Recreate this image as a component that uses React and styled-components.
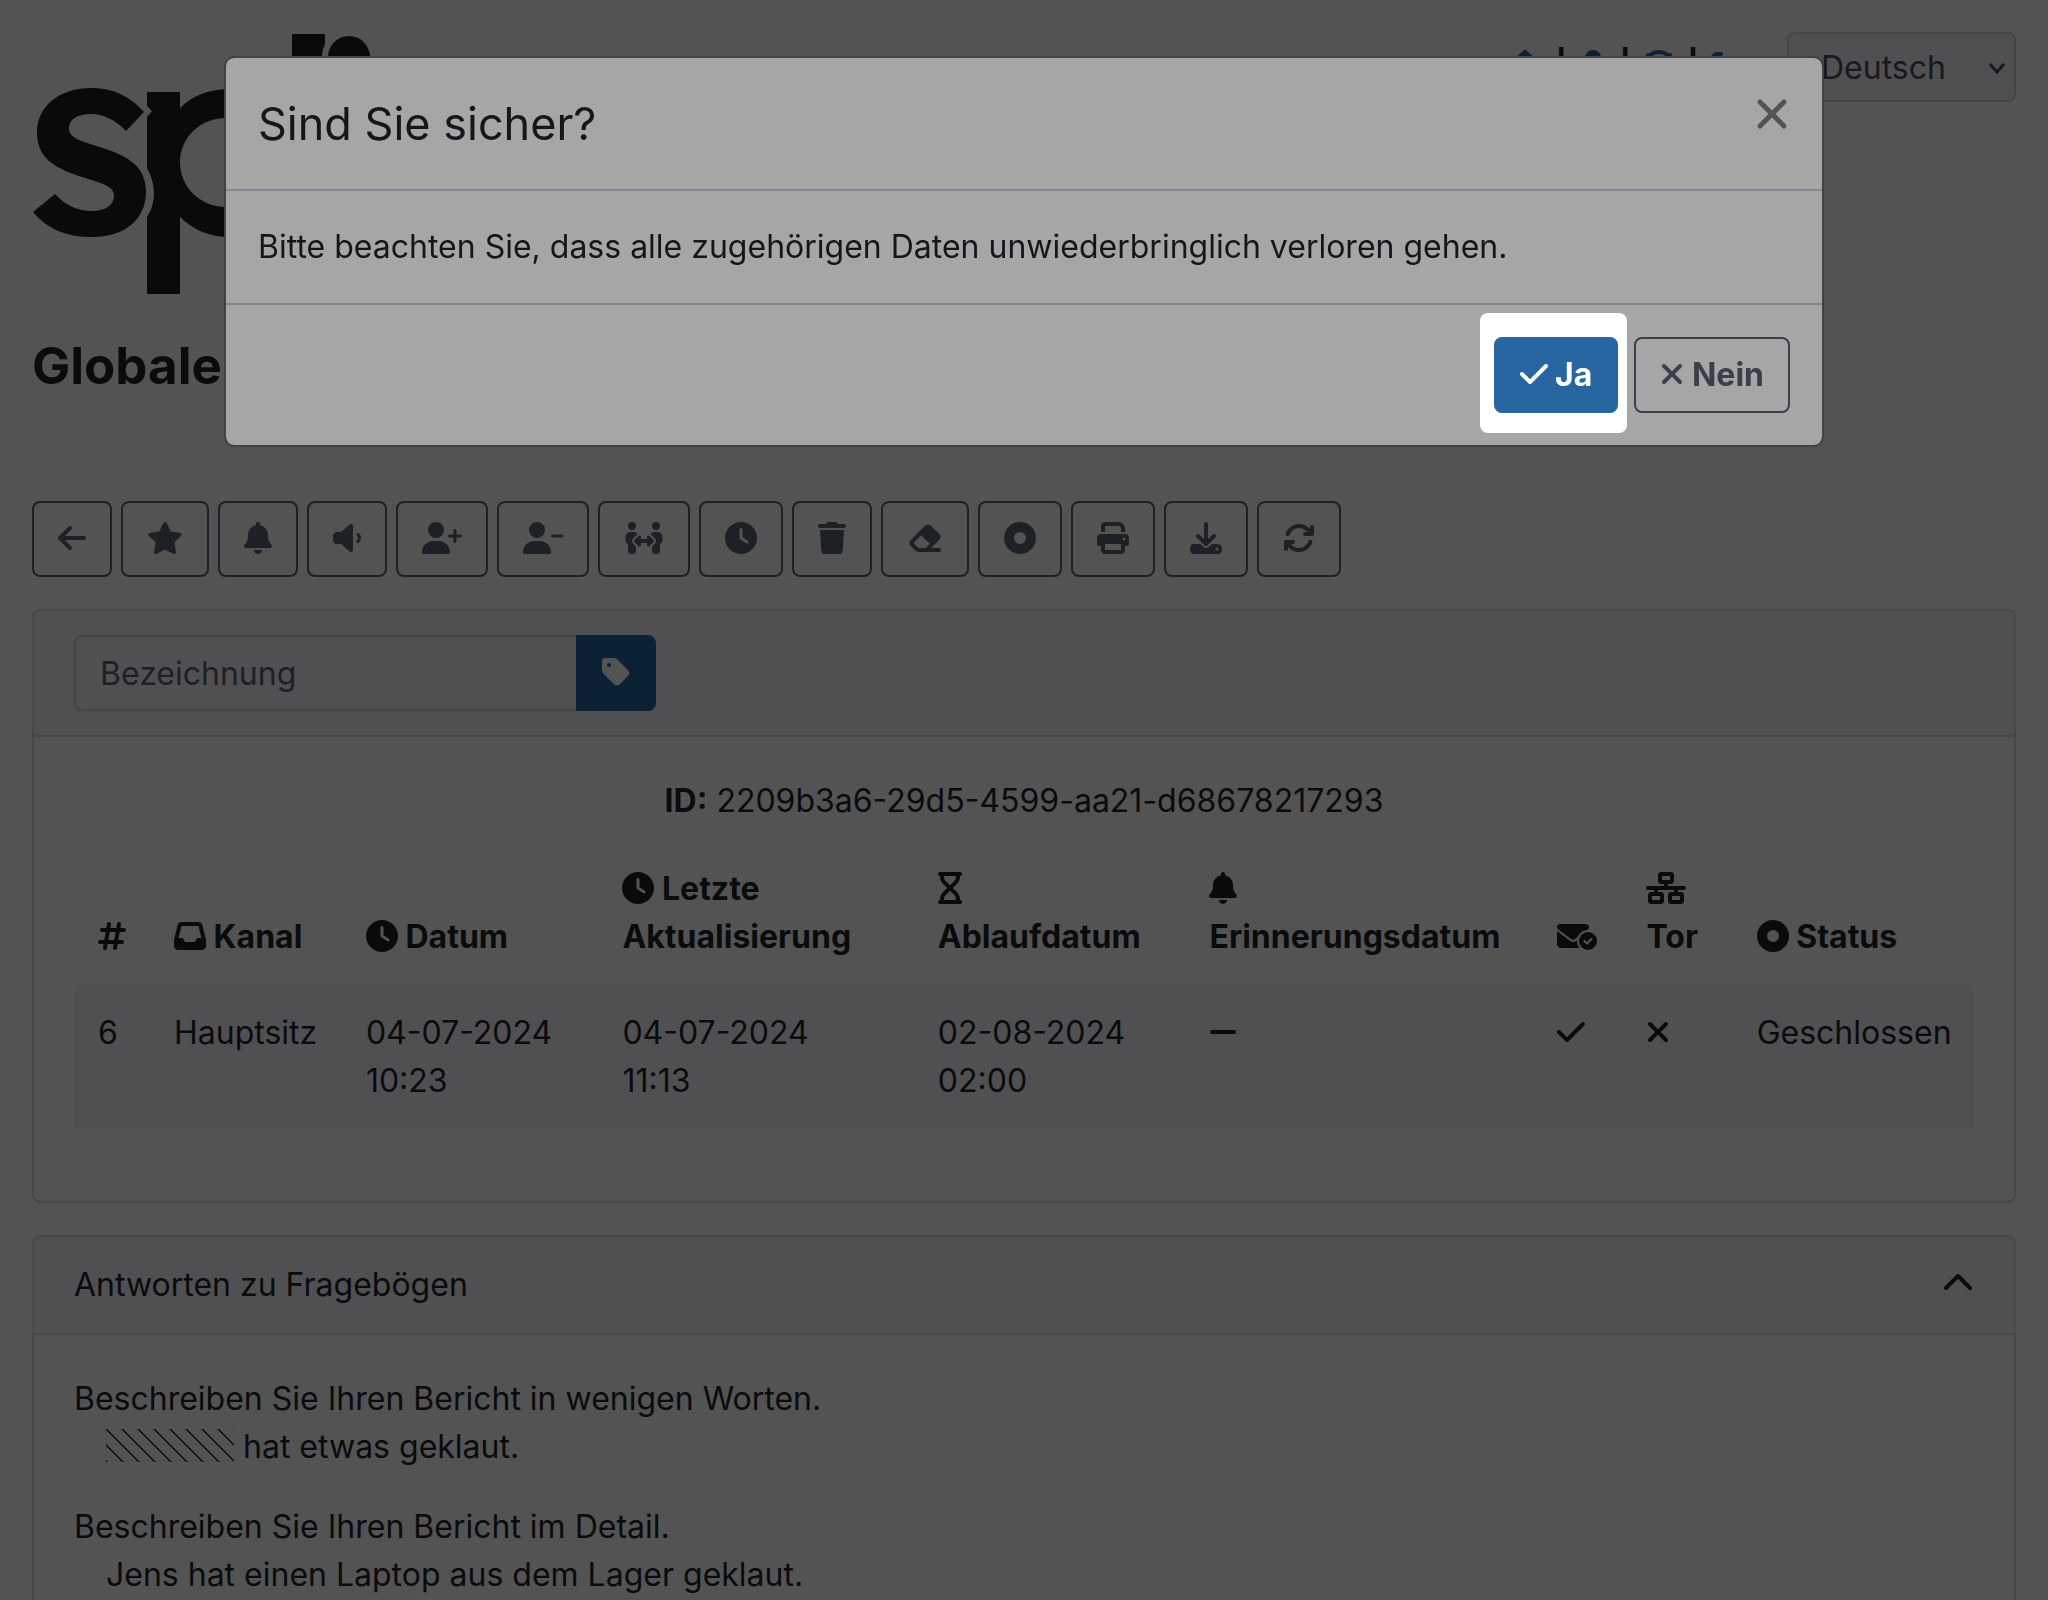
import React from "react";
import styled, { createGlobalStyle } from "styled-components";
import {
  FaArrowLeft, FaStar, FaBell, FaVolumeLow, FaUserPlus, FaUserMinus, FaPeopleArrows,
  FaClock, FaTrash, FaEraser, FaCircleDot, FaPrint, FaDownload, FaArrowsRotate, FaTag,
  FaHashtag, FaInbox, FaNetworkWired, FaCheck, FaXmark, FaMinus, FaChevronUp, FaHouse,
  FaUser, FaLifeRing, FaRightFromBracket,
} from "react-icons/fa6";

const c = {
  page: "#535353",
  tint: "#505052",
  line: "#484848",
  field: "#434547",
  text: "#0a0b0d",
  muted: "#1d2025",
  link: "#0d2135",
  modal: "#a6a6a6",
  modalText: "#14161a",
  modalLine: "#848893",
  modalMuted: "#3b3f49",
  primary: "#2866a2",
};

const GlobalStyle = createGlobalStyle`
  *, *::before, *::after { box-sizing: border-box; }
  body {
    margin: 0;
    background: ${c.page};
    color: ${c.text};
    font-family: Inter, "Liberation Sans", sans-serif;
    font-size: 32px;
    line-height: 48px;
  }
  button, input, select { font: inherit; color: inherit; }
`;

const Page = styled.div`
  height: 100vh;
  overflow: hidden;
  padding: 32px;
  display: flex;
  flex-direction: column;
`;

const Header = styled.header`
  display: flex;
  justify-content: space-between;
  align-items: flex-start;
`;

const Logo = styled.svg`
  display: block;
  width: 372px;
  height: 264px;
  fill: #0a0a0a;
`;

const Nav = styled.nav`
  display: flex;
  align-items: center;
  gap: 44px;
`;

const NavLinks = styled.div`
  display: flex;
  align-items: center;
  gap: 12px;
  font-weight: 700;
`;

const NavLink = styled.a`
  display: flex;
  color: ${c.link};
`;

const Icon = styled.span`
  svg {
    height: 32px;
    width: ${(p) => p.$width}px;
    vertical-align: -4px;
  }
`;

const LanguageBox = styled.div`
  position: relative;
  display: flex;
`;

const Language = styled.select`
  width: 229px;
  height: 70px;
  padding: 2px 32px 0;
  appearance: none;
  background: ${c.tint};
  border: 2px solid ${c.field};
  border-radius: 8px;
  color: #17191c;
`;

const Caret = styled.svg`
  position: absolute;
  right: 10px;
  top: 28px;
  width: 18px;
  height: 16px;
  fill: none;
  stroke: #17191c;
  stroke-width: 3;
  pointer-events: none;
`;

const Title = styled.h1`
  margin: 32px 0 0;
  font-size: 51px;
  line-height: 76px;
  font-weight: 700;
`;

const Toolbar = styled.div`
  display: flex;
  gap: 9px;
  margin: 97px 0 32px;
`;

const Button = styled.button`
  padding: 12px 24px;
  height: 76px;
  background: none;
  border: 2px solid ${(p) => p.$color || c.muted};
  border-radius: 8px;
  color: ${(p) => p.$color || c.muted};
  font-weight: 700;
`;

const Card = styled.section`
  flex: none;
  margin-bottom: 32px;
  border: 2px solid ${c.line};
  border-radius: 8px;
`;

const CardHeader = styled.div`
  display: flex;
  justify-content: space-between;
  padding: 24px 40px;
  background: ${c.tint};
  border-bottom: 2px solid ${c.line};
  border-radius: 6px 6px 0 0;
`;

const CardBody = styled.div`
  padding: 40px;
`;

const LabelField = styled.div`
  display: flex;
  width: 582px;
`;

const LabelInput = styled.input`
  flex: 1;
  min-width: 0;
  height: 76px;
  padding: 12px 24px;
  background: ${c.tint};
  border: 2px solid ${c.field};
  border-right: 0;
  border-radius: 8px 0 0 8px;
  &::placeholder { color: ${c.muted}; opacity: 1; }
`;

const TagButton = styled(Button)`
  background: ${c.link};
  border-color: ${c.link};
  border-radius: 0 8px 8px 0;
  color: ${c.page};
`;

const ReportId = styled.div`
  text-align: center;
  margin-bottom: 16px;
`;

const Table = styled.table`
  width: 100%;
  margin-bottom: 32px;
  border-collapse: collapse;
  table-layout: fixed;
  text-align: left;
  th, td { padding: 24px; }
  th { vertical-align: bottom; }
  td { vertical-align: top; background: ${c.tint}; }
`;

const Collapse = styled.button`
  padding: 0;
  border: 0;
  background: none;
  height: 48px;
`;

const Answers = styled.dl`
  margin: 0;
  display: grid;
  gap: 32px;
  dd { margin: 0 0 0 32px; }
`;

const Redacted = styled.svg`
  width: 128px;
  height: 33px;
  vertical-align: -4px;
`;

const Backdrop = styled.div`
  position: fixed;
  inset: 0;
  padding: 56px 32px;
`;

const Dialog = styled.div`
  max-width: 1600px;
  margin: 0 auto;
  background: ${c.modal};
  background-clip: padding-box;
  border: 2px solid #424242;
  border-radius: 10px;
  color: ${c.modalText};
`;

const DialogHeader = styled.div`
  display: flex;
  justify-content: space-between;
  align-items: flex-start;
  padding: 32px;
  border-bottom: 2px solid ${c.modalLine};
`;

const DialogTitle = styled.h2`
  margin: 0;
  font-size: 45px;
  line-height: 67px;
  font-weight: 400;
`;

const Close = styled.button`
  display: flex;
  padding: 8px 2px;
  border: 0;
  background: none;
  color: #535353;
  svg { width: 32px; height: 32px; }
`;

const DialogBody = styled.div`
  padding: 32px;
`;

const DialogFooter = styled.div`
  display: flex;
  justify-content: flex-end;
  gap: 16px;
  padding: 32px;
  border-top: 2px solid ${c.modalLine};
`;

const Spotlight = styled.div`
  position: relative;
  display: flex;
  &::before {
    content: "";
    position: absolute;
    inset: -24px -9px -20px -14px;
    background: #fff;
    border-radius: 8px;
  }
`;

const Confirm = styled(Button)`
  position: relative;
  background: ${c.primary};
  border-color: ${c.primary};
  color: #fff;
`;

const Ic = ({ glyph: Glyph, width = 32 }) => (
  <Icon $width={width}><Glyph aria-hidden="true" /></Icon>
);

const Hourglass = (props) => (
  <svg viewBox="0 0 384 512" fill="currentColor" {...props}>
    <path d="M0 32C0 14.300 14.300 0 32 0H352c17.700 0 32 14.300 32 32s-14.300 32-32 32V75c0 42.400-16.900 83.100-46.900 113.100L237.300 256l67.900 67.900c30 30 46.900 70.700 46.900 113.100v11c17.700 0 32 14.300 32 32s-14.300 32-32 32H32c-17.700 0-32-14.300-32-32s14.300-32 32-32V437c0-42.400 16.900-83.100 46.900-113.100L146.700 256 78.900 188.100C48.900 158.100 32 117.400 32 75V64C14.300 64 0 49.700 0 32zM96 64V75c0 25.500 10.100 49.900 28.100 67.900L192 210.700l67.900-67.900c18-18 28.100-42.400 28.100-67.900V64H96zm0 384H288V437c0-25.500-10.100-49.900-28.100-67.900L192 301.300l-67.900 67.900c-18 18-28.100 42.400-28.100 67.900v11z" />
  </svg>
);

const MailCheck = (props) => (
  <svg viewBox="0 0 640 512" fill="currentColor" {...props}>
    <path d="M48 64C21.500 64 0 85.500 0 112c0 15.100 7.100 29.300 19.200 38.400L236.800 313.600c11.400 8.500 27 8.500 38.400 0l57.400-43c23.900-59.800 79.700-103.300 146.300-109.800l13.900-10.400c12.100-9.100 19.200-23.300 19.200-38.400 0-26.500-21.500-48-48-48H48zM294.400 339.200c-22.800 17.100-54 17.100-76.800 0L0 176V384c0 35.300 28.700 64 64 64H360.200C335.100 417.600 320 378.500 320 336c0-5.600.3-11.100.8-16.600l-26.400 19.800zM640 336a144 144 0 1 0-288 0 144 144 0 1 0 288 0zm-76.700-43.300c6.200 6.200 6.200 16.400 0 22.600l-72 72c-6.200 6.200-16.400 6.200-22.600 0l-40-40c-6.200-6.200-6.200-16.400 0-22.600s16.400-6.200 22.600 0L480 353.400l60.700-60.700c6.200-6.200 16.400-6.200 22.600 0z" />
  </svg>
);

const tools = [
  [FaArrowLeft, 28, "Zurück"],
  [FaStar, 36, "Wichtig"],
  [FaBell, 28, "Erinnerung"],
  [FaVolumeLow, 28, "Stumm"],
  [FaUserPlus, 40, "Zugriff gewähren"],
  [FaUserMinus, 40, "Zugriff entziehen"],
  [FaPeopleArrows, 40, "Übertragen"],
  [FaClock, 32, "Aufschieben"],
  [FaTrash, 28, "Löschen"],
  [FaEraser, 36, "Schwärzen"],
  [FaCircleDot, 32, "Status"],
  [FaPrint, 32, "Drucken"],
  [FaDownload, 32, "Herunterladen"],
  [FaArrowsRotate, 32, "Aktualisieren"],
];

const columns = [
  { share: "4%", icon: FaHashtag, iconWidth: 28 },
  { share: "10.1%", icon: FaInbox, name: "Kanal" },
  { share: "13.5%", icon: FaClock, name: "Datum" },
  { share: "16.6%", icon: FaClock, name: "Letzte Aktualisierung" },
  { share: "14.3%", icon: Hourglass, iconWidth: 24, name: "Ablaufdatum" },
  { share: "18.3%", icon: FaBell, iconWidth: 28, name: "Erinnerungsdatum" },
  { share: "4.7%", icon: MailCheck, iconWidth: 40 },
  { share: "5.8%", icon: FaNetworkWired, iconWidth: 40, name: "Tor" },
  { share: "12.7%", icon: FaCircleDot, name: "Status" },
];

const navItems = [
  [FaHouse, 36, "Startseite"],
  [FaUser, 28, "Benutzer"],
  [FaLifeRing, 32, "Hilfe"],
  [FaRightFromBracket, 32, "Abmelden"],
];

export default function App() {
  return (
    <>
      <GlobalStyle />
      <Page>
        <Header>
          <Logo viewBox="32 32 372 264" role="img" aria-label="Logo">
            <path d="M144 112C128 94 110 88 91 88C60 88 37 106 37 132C37 158 54 168 82 177C104 184 114 186 114 196C114 206 104 211 92 211C76 211 64 204 55 194L33 212C48 230 68 237 92 237C124 237 146 220 146 192C146 166 128 156 100 147C82 141 69 139 69 128C69 119 78 114 91 114C104 114 117 121 126 131Z" />
            <path d="M147 92H180V294H147V217Q154 206 154 193Q154 181 147 168V117L152 111L147 106Z" />
            <path fillRule="evenodd" d="M180 108C193 95 210 89 230 89A74 74 0 0 1 230 237C210 237 193 230 180 217V162C180 187 200 207 226 207A45 45 0 0 0 226 118C200 118 180 138 180 162Z" />
            <path d="M292 34H325V44Q322 50 322 58V237H292Z" />
            <circle cx="349" cy="57" r="21" />
            <path d="M333 92H366V237H333Z" />
          </Logo>
          <Nav>
            <NavLinks>
              {navItems.map(([glyph, width, name], i) => (
                <React.Fragment key={name}>
                  {i > 0 && <span>|</span>}
                  <NavLink href="#" aria-label={name}><Ic glyph={glyph} width={width} /></NavLink>
                </React.Fragment>
              ))}
            </NavLinks>
            <LanguageBox>
              <Language aria-label="Sprache" defaultValue="de">
                <option value="de">Deutsch</option>
              </Language>
              <Caret viewBox="0 0 18 16"><path d="M2 4l7 8 7-8" /></Caret>
            </LanguageBox>
          </Nav>
        </Header>

        <Title>Globaleaks</Title>

        <Toolbar>
          {tools.map(([glyph, width, name]) => (
            <Button key={name} type="button" aria-label={name}><Ic glyph={glyph} width={width} /></Button>
          ))}
        </Toolbar>

        <Card>
          <CardHeader>
            <LabelField>
              <LabelInput type="text" placeholder="Bezeichnung" aria-label="Bezeichnung" />
              <TagButton type="button" aria-label="Bezeichnung speichern"><Ic glyph={FaTag} width={28} /></TagButton>
            </LabelField>
          </CardHeader>
          <CardBody>
            <ReportId><b>ID:</b> 2209b3a6-29d5-4599-aa21-d68678217293</ReportId>
            <Table>
              <colgroup>
                {columns.map((col, i) => <col key={i} width={col.share} />)}
              </colgroup>
              <thead>
                <tr>
                  {columns.map((col, i) => (
                    <th key={i} scope="col">
                      <Ic glyph={col.icon} width={col.iconWidth} />{col.name && ` ${col.name}`}
                    </th>
                  ))}
                </tr>
              </thead>
              <tbody>
                <tr>
                  <td>6</td>
                  <td>Hauptsitz</td>
                  <td>04-07-2024<br />10:23</td>
                  <td>04-07-2024<br />11:13</td>
                  <td>02-08-2024<br />02:00</td>
                  <td><Ic glyph={FaMinus} width={28} /></td>
                  <td><Ic glyph={FaCheck} width={28} /></td>
                  <td><Ic glyph={FaXmark} width={24} /></td>
                  <td>Geschlossen</td>
                </tr>
              </tbody>
            </Table>
          </CardBody>
        </Card>

        <Card>
          <CardHeader>
            <span>Antworten zu Fragebögen</span>
            <Collapse type="button" aria-label="Einklappen"><Ic glyph={FaChevronUp} /></Collapse>
          </CardHeader>
          <CardBody>
            <Answers>
              <div>
                <dt>Beschreiben Sie Ihren Bericht in wenigen Worten.</dt>
                <dd>
                  <Redacted aria-label="Geschwärzt">
                    <defs>
                      <pattern id="hatch" width="16" height="16" patternUnits="userSpaceOnUse">
                        <path d="M-2-2l20 20M14-2l4 4M-2 14l4 4" stroke="#0a0b0d" strokeWidth="1.5" />
                      </pattern>
                    </defs>
                    <rect width="128" height="33" fill="url(#hatch)" />
                  </Redacted>{" "}
                  hat etwas geklaut.
                </dd>
              </div>
              <div>
                <dt>Beschreiben Sie Ihren Bericht im Detail.</dt>
                <dd>Jens hat einen Laptop aus dem Lager geklaut.</dd>
              </div>
            </Answers>
          </CardBody>
        </Card>
      </Page>

      <Backdrop>
        <Dialog role="dialog" aria-modal="true" aria-labelledby="dialog-title">
          <DialogHeader>
            <DialogTitle id="dialog-title">Sind Sie sicher?</DialogTitle>
            <Close type="button" aria-label="Schließen">
              <svg viewBox="0 0 32 32" fill="none" stroke="currentColor" strokeWidth="5" strokeLinecap="round">
                <path d="M4 4L28 28M28 4L4 28" />
              </svg>
            </Close>
          </DialogHeader>
          <DialogBody>
            Bitte beachten Sie, dass alle zugehörigen Daten unwiederbringlich verloren gehen.
          </DialogBody>
          <DialogFooter>
            <Spotlight>
              <Confirm type="button"><Ic glyph={FaCheck} width={28} /> Ja</Confirm>
            </Spotlight>
            <Button type="button" $color={c.modalMuted}><Ic glyph={FaXmark} width={24} /> Nein</Button>
          </DialogFooter>
        </Dialog>
      </Backdrop>
    </>
  );
}
